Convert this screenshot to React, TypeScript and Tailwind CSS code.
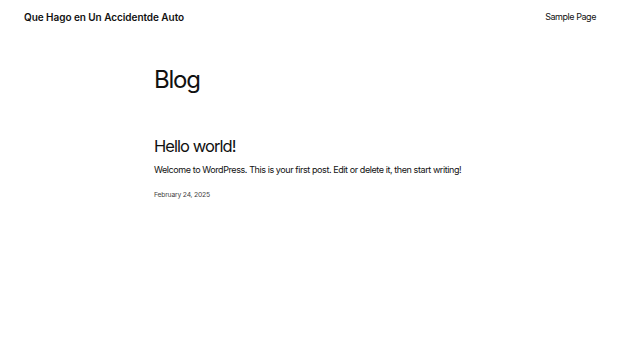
export default function App() {
  return (
    <div className="min-h-[343px] w-full bg-white text-[#111] font-['Inter',sans-serif]">
      <header className="flex items-center justify-between pl-6 pr-[24px] pt-[11px]">
        <a className="text-[10px] font-semibold tracking-[-0.005em] leading-[12px]">Que Hago en Un Accidentde Auto</a>
        <nav className="text-[9px] tracking-[-0.05em] leading-[12px]">Sample Page</nav>
      </header>
      <main className="mx-auto w-[312px] pt-[43px]">
        <h1 className="text-[24px] tracking-[-0.05em] leading-[28px]">Blog</h1>
        <article className="pt-[42px]">
          <h2 className="text-[16.5px] tracking-[-0.057em] leading-[20px]">Hello world!</h2>
          <p className="mt-[8px] text-[9px] tracking-[-0.046em] leading-[12px]">
            Welcome to WordPress. This is your first post. Edit or delete it, then start writing!
          </p>
          <p className="mt-[14px] text-[6.8px] tracking-[-0.03em] leading-[10px] text-[#444]">February 24, 2025</p>
        </article>
      </main>
    </div>
  )
}
